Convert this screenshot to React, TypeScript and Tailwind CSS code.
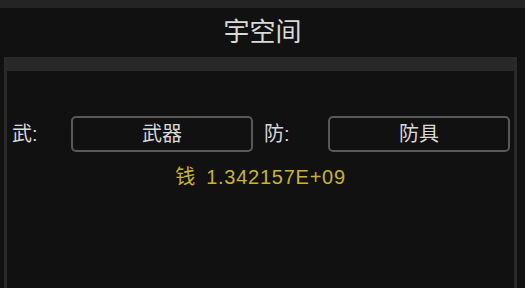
export default function App() {
  const font = { fontFamily: '"Liberation Sans", "Noto Sans CJK SC", sans-serif' };
  return (
    <div
      className="flex h-[288px] w-[525px] flex-col overflow-hidden bg-[#111111] text-[#d9d9d9]"
      style={font}
    >
      <div className="h-[8px] bg-[#242424]" />
      <div className="flex h-[49px] items-center justify-center pb-[2px] text-[26px] leading-none">
        宇空间
      </div>
      <div className="ml-[4px] mr-[8px] flex flex-1 flex-col border-x-[3px] border-[#2a2a2a]">
        <div className="h-[14px] bg-[#282828]" />
        <div className="flex items-center pt-[45px] text-[20px]">
          <div className="w-[64px] pl-[5px]">武:</div>
          <button className="flex h-[36px] w-[182px] items-center justify-center rounded-[5px] border-2 border-[#595959] bg-[#111111] text-[20px] text-[#d9d9d9]">
            武器
          </button>
          <div className="w-[75px] pl-[11px]">防:</div>
          <button className="flex h-[36px] w-[182px] items-center justify-center rounded-[5px] border-2 border-[#595959] bg-[#111111] text-[20px] text-[#d9d9d9]">
            防具
          </button>
        </div>
        <div className="mt-[11px] flex justify-center text-[20px] leading-[28px] text-[#c9b32f]">
          <span className="mr-[11px]">钱</span>
          <span className="tracking-[0.75px]">1.342157E+09</span>
        </div>
      </div>
    </div>
  );
}
